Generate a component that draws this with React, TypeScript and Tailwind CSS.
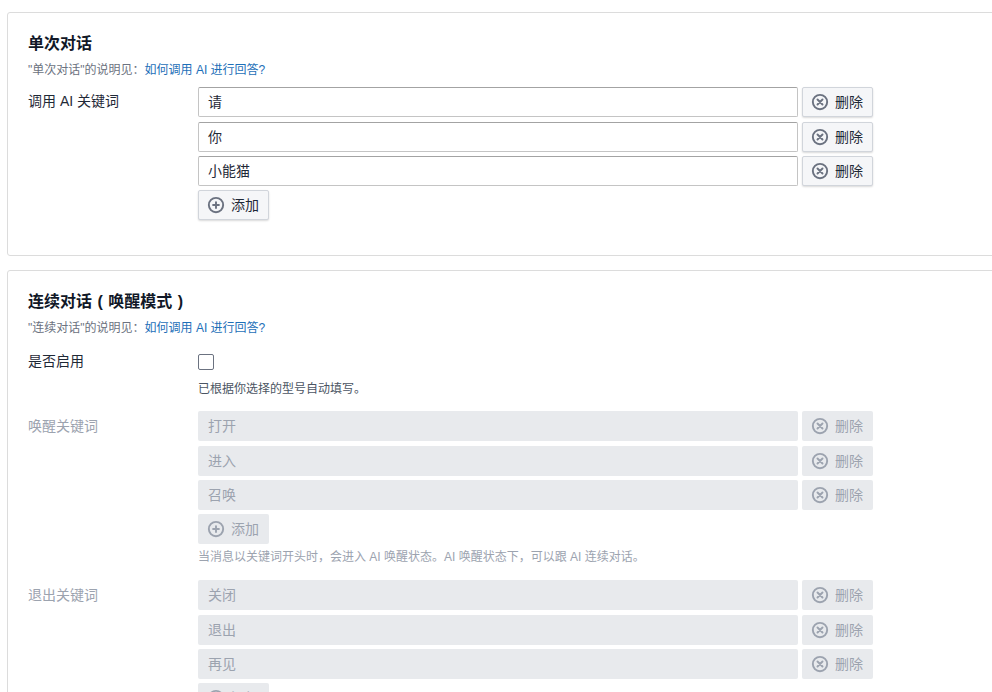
const XIcon = () => (
  <svg className="h-5 w-5 mr-[5px] shrink-0" fill="none" viewBox="0 0 24 24" stroke="currentColor" strokeWidth={2.3}>
    <circle cx="12" cy="12" r="8.6" />
    <path strokeLinecap="round" strokeLinejoin="round" d="M9 9l6 6m0-6l-6 6" />
  </svg>
);
const PlusIcon = () => (
  <svg className="h-5 w-5 mr-[5px] shrink-0" fill="none" viewBox="0 0 24 24" stroke="currentColor" strokeWidth={2.3}>
    <circle cx="12" cy="12" r="8.6" />
    <path strokeLinecap="round" strokeLinejoin="round" d="M12 8.5v7m-3.5-3.5h7" />
  </svg>
);

function Btn({ add, disabled }: { add?: boolean; disabled?: boolean }) {
  return (
    <button
      className={
        disabled
          ? "flex h-[30px] w-[71px] items-center rounded-[2px] bg-[#e8eaed] pl-2 text-sm text-[#9ca3af]"
          : "flex h-[30px] w-[71px] items-center rounded-[2px] border border-[#d1d5db] bg-[#f5f6f8] pl-[7px] text-sm text-[#1f2937] shadow-[0_1px_2px_rgba(0,0,0,0.15)]"
      }
    >
      <span className={disabled ? "text-[#9ca3af]" : "text-[#6b7280]"}>
        {add ? <PlusIcon /> : <XIcon />}
      </span>
      {add ? "添加" : "删除"}
    </button>
  );
}

function KeywordList({ items, disabled }: { items: string[]; disabled?: boolean }) {
  return (
    <div className="flex flex-col gap-[4.4px]">
      {items.map((v) => (
        <div key={v} className="flex gap-1">
          <div
            className={
              disabled
                ? "flex h-[30px] w-[600px] items-center rounded-[2px] bg-[#e8eaed] px-2.5 text-sm text-[#9ca3af]"
                : "flex h-[30px] w-[600px] items-center rounded-[2px] border border-[#c4c4c4] border-t-[#a3a3a3] bg-white px-[9px] text-sm text-[#1f2937]"
            }
          >
            {v}
          </div>
          <Btn disabled={disabled} />
        </div>
      ))}
      <Btn add disabled={disabled} />
    </div>
  );
}

function Desc({ name }: { name: string }) {
  return (
    <p className="mt-[7px] h-[18px] text-xs leading-[18px] text-[#6b7280]">
      "{name}"的说明见：<span className="text-[#1d6fb8]">如何调用 AI 进行回答?</span>
    </p>
  );
}

export default function App() {
  return (
    <div className="h-[692px] w-[992px] overflow-hidden bg-white pl-[7px] pt-3 text-[#1f2937] [font-family:'Liberation_Sans','Noto_Sans_CJK_SC',sans-serif]">
      <section className="h-[244px] w-[1000px] rounded-[3px] border border-[#dcdcdc] px-5 pt-[21px]">
        <h2 className="h-5 text-base leading-5 font-bold text-[#111827]">单次对话</h2>
        <Desc name="单次对话" />
        <div className="mt-[8.2px] flex">
          <div className="w-[170px] pt-1 text-sm leading-5">调用 AI 关键词</div>
          <KeywordList items={["请", "你", "小能猫"]} />
        </div>
      </section>

      <section className="mt-[14px] w-[1000px] rounded-[3px] border border-[#dcdcdc] px-5 pt-[21px]">
        <h2 className="h-5 text-base leading-5 font-bold text-[#111827] [word-spacing:1px]">连续对话 ( 唤醒模式 )</h2>
        <Desc name="连续对话" />
        <div className="mt-[14px] flex">
          <div className="w-[170px] text-sm leading-5">是否启用</div>
          <div>
            <div className="mt-[3px] h-4 w-4 rounded-[2px] border border-[#6b7280] bg-white" />
            <p className="mt-[10px] h-[18px] text-xs leading-[18px] text-[#4b5563]">已根据你选择的型号自动填写。</p>
          </div>
        </div>
        <div className="mt-[13.2px] flex">
          <div className="w-[170px] pt-[5px] text-sm leading-5 text-[#9ca3af]">唤醒关键词</div>
          <div>
            <KeywordList disabled items={["打开", "进入", "召唤"]} />
            <p className="mt-[4px] h-[18px] text-xs leading-[18px] text-[#9ca3af]">
              当消息以关键词开头时，会进入 AI 唤醒状态。AI 唤醒状态下，可以跟 AI 连续对话。
            </p>
          </div>
        </div>
        <div className="mt-[13.8px] flex">
          <div className="w-[170px] pt-[5px] text-sm leading-5 text-[#9ca3af]">退出关键词</div>
          <KeywordList disabled items={["关闭", "退出", "再见"]} />
        </div>
      </section>
    </div>
  );
}
